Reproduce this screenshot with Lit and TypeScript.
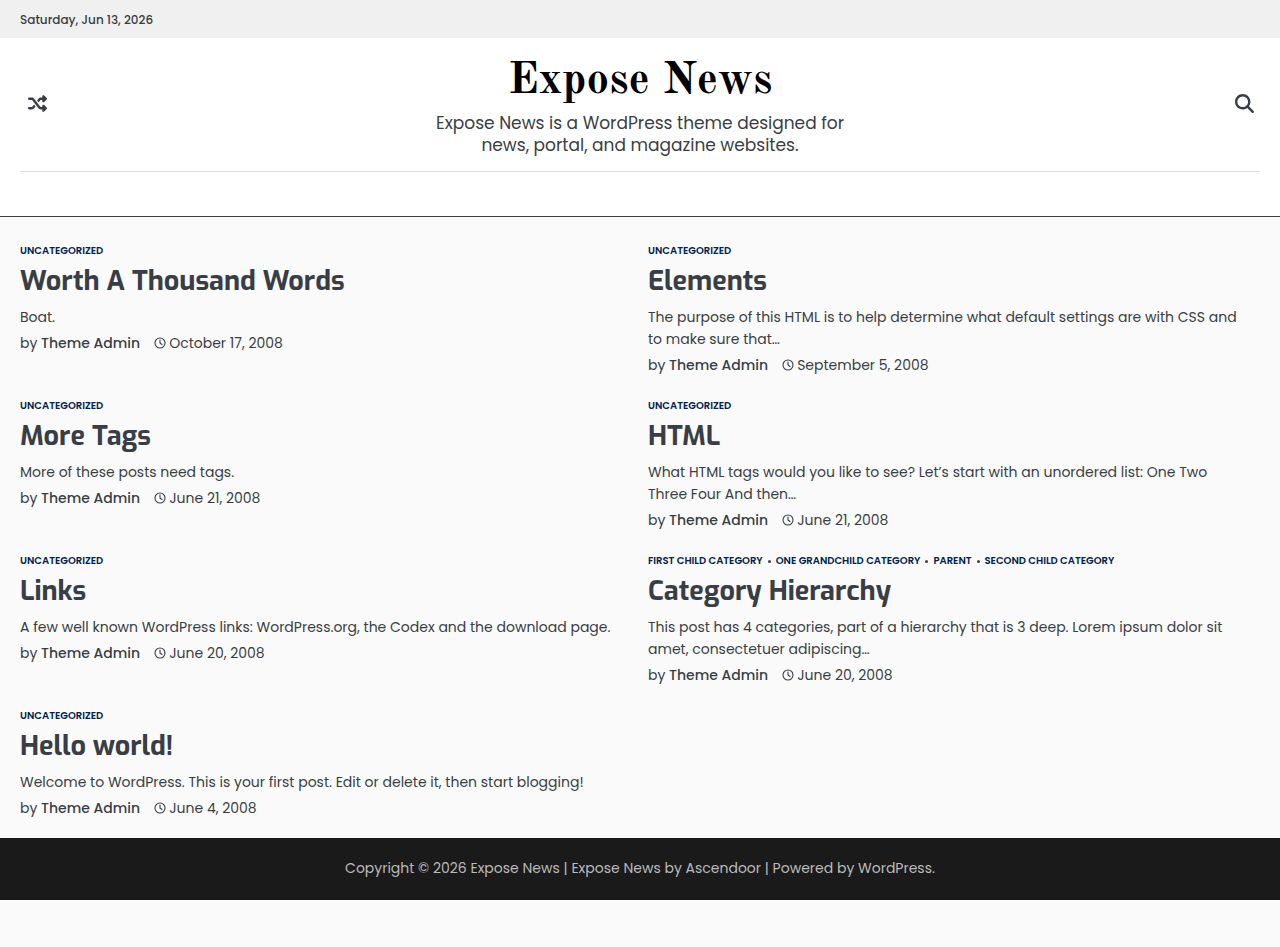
import { LitElement, html, css } from "lit";
import { customElement, property } from "lit/decorators.js";

interface Post {
  categories: string[];
  title: string;
  excerpt: string;
  date: string;
}

const posts: Post[] = [
  { categories: ["Uncategorized"], title: "Worth A Thousand Words", excerpt: "Boat.", date: "October 17, 2008" },
  {
    categories: ["Uncategorized"],
    title: "Elements",
    excerpt: "The purpose of this HTML is to help determine what default settings are with CSS and to make sure that…",
    date: "September 5, 2008",
  },
  { categories: ["Uncategorized"], title: "More Tags", excerpt: "More of these posts need tags.", date: "June 21, 2008" },
  {
    categories: ["Uncategorized"],
    title: "HTML",
    excerpt: "What HTML tags would you like to see? Let’s start with an unordered list: One Two Three Four And then…",
    date: "June 21, 2008",
  },
  {
    categories: ["Uncategorized"],
    title: "Links",
    excerpt: "A few well known WordPress links: WordPress.org, the Codex and the download page.",
    date: "June 20, 2008",
  },
  {
    categories: ["First Child Category", "One Grandchild Category", "Parent", "Second Child Category"],
    title: "Category Hierarchy",
    excerpt: "This post has 4 categories, part of a hierarchy that is 3 deep. Lorem ipsum dolor sit amet, consectetuer adipiscing…",
    date: "June 20, 2008",
  },
  {
    categories: ["Uncategorized"],
    title: "Hello world!",
    excerpt: "Welcome to WordPress. This is your first post. Edit or delete it, then start blogging!",
    date: "June 4, 2008",
  },
];

@customElement("post-card")
export class PostCard extends LitElement {
  @property({ attribute: false }) post!: Post;

  static styles = css`
    :host {
      display: block;
      min-width: 0;
    }
    a {
      color: inherit;
      text-decoration: none;
    }
    .categories {
      display: flex;
      flex-wrap: wrap;
      align-items: center;
      gap: 0 5px;
      margin: 0 0 3px;
      padding: 0;
      list-style: none;
      font-size: 10px;
      line-height: 20px;
      font-weight: 600;
      text-transform: uppercase;
      color: #00224f;
    }
    .category {
      display: flex;
      align-items: center;
      gap: 5px;
    }
    .category + .category::before {
      content: "";
      width: 3px;
      height: 3px;
      border-radius: 50%;
      background: #393e46;
    }
    .title {
      margin: 0 0 8px;
      font-family: Exo, "Exo 2", "Open Sans", sans-serif;
      font-size: 27px;
      line-height: 34px;
      font-weight: 700;
    }
    .excerpt {
      margin: 0 0 4px;
      padding-right: 12px;
    }
    .meta {
      display: flex;
      align-items: center;
      gap: 14px;
    }
    .author {
      font-weight: 500;
    }
    .date {
      display: flex;
      align-items: center;
      gap: 3px;
    }
    .clock {
      width: 12px;
      height: 12px;
      fill: none;
      stroke: currentColor;
      stroke-width: 1.1;
      stroke-linecap: round;
      stroke-linejoin: round;
    }
  `;

  render() {
    const { categories, title, excerpt, date } = this.post;
    return html`
      <article>
        <ul class="categories">
          ${categories.map((name) => html`<li class="category"><a href="#">${name}</a></li>`)}
        </ul>
        <h2 class="title"><a href="#">${title}</a></h2>
        <p class="excerpt">${excerpt}</p>
        <div class="meta">
          <span>by <a class="author" href="#">Theme Admin</a></span>
          <a class="date" href="#">
            <svg class="clock" viewBox="0 0 12 12" aria-hidden="true">
              <circle cx="6" cy="6" r="5" />
              <path d="M6 3V6l2 1.500" />
            </svg>
            <time>${date}</time>
          </a>
        </div>
      </article>
    `;
  }
}

@customElement("app-root")
export class AppRoot extends LitElement {
  static styles = css`
    :host {
      display: block;
      min-height: 100vh;
      background: #fafafa;
      color: #393e46;
      font-family: Poppins, Inter, sans-serif;
      font-size: 14px;
      line-height: 22px;
    }
    a {
      color: inherit;
      text-decoration: none;
    }
    .topbar {
      padding: 9px 20px 7px;
      background: #f0f0f0;
      font-size: 12px;
      font-weight: 500;
    }
    .header {
      background: #fff;
      border-bottom: 1px solid #393e46;
      padding: 0 20px 44px;
    }
    .masthead {
      display: grid;
      grid-template-columns: 1fr minmax(0, 432px) 1fr;
      align-items: center;
      padding: 12px 0 15px;
      border-bottom: 1px solid #dedede;
    }
    .branding {
      padding-top: 4px;
      text-align: center;
    }
    .site-title {
      margin: 0 0 2px;
      font-family: "Old Standard TT", "Liberation Serif", serif;
      font-size: 45px;
      line-height: 56px;
      font-weight: 700;
      color: #000;
    }
    .tagline {
      margin: 0;
      font-size: 17px;
      line-height: 22px;
    }
    .icon-button {
      display: flex;
      padding: 8px;
      border: 0;
      background: none;
      color: inherit;
      justify-self: start;
    }
    .search {
      justify-self: end;
      padding: 6px;
    }
    .icon {
      width: 19px;
      height: 19px;
      fill: currentColor;
    }
    .posts {
      display: grid;
      grid-template-columns: repeat(2, minmax(0, 1fr));
      gap: 20px 16px;
      padding: 24px 20px 19px;
    }
    .footer {
      padding: 19px 20px 21px;
      background: #1a1a1a;
      color: #bababa;
      text-align: center;
    }
    .footer p {
      margin: 0;
    }
  `;

  render() {
    return html`
      <div class="topbar">Saturday, Jun 13, 2026</div>
      <header class="header">
        <div class="masthead">
          <button class="icon-button" type="button" aria-label="Random post">
            <svg class="icon" viewBox="0 0 512 512">
              <path
                d="M403.8 34.4c12-5 25.700-2.200 34.900 6.900l64 64c6 6 9.400 14.100 9.400 22.600s-3.400 16.600-9.400 22.600l-64 64c-9.200 9.200-22.900 11.900-34.900 6.900S384 204.900 384 192V160H352c-10.100 0-19.600 4.700-25.600 12.800L284 229.300 244 176l31.200-41.600C293.300 110.200 321.800 96 352 96h32V64c0-12.900 7.800-24.600 19.800-29.600zM164 282.700L204 336l-31.200 41.600C154.700 401.800 126.200 416 96 416H32c-17.700 0-32-14.300-32-32s14.300-32 32-32H96c10.100 0 19.600-4.700 25.600-12.800L164 282.700zm274.600 188c-9.200 9.200-22.900 11.900-34.900 6.900s-19.800-16.600-19.800-29.600V416H352c-30.200 0-58.700-14.200-76.800-38.400L121.600 172.800c-6-8.100-15.500-12.800-25.600-12.800H32c-17.700 0-32-14.300-32-32s14.300-32 32-32H96c30.200 0 58.700 14.200 76.800 38.400L326.400 339.200c6 8.100 15.500 12.800 25.600 12.800h32V320c0-12.900 7.800-24.600 19.800-29.600s25.700-2.200 34.900 6.900l64 64c6 6 9.400 14.100 9.400 22.600s-3.400 16.600-9.400 22.600l-64 64z"
              />
            </svg>
          </button>
          <div class="branding">
            <h1 class="site-title"><a href="#">Expose News</a></h1>
            <p class="tagline">Expose News is a WordPress theme designed for news, portal, and magazine websites.</p>
          </div>
          <button class="icon-button search" type="button" aria-label="Search">
            <svg class="icon" viewBox="0 0 512 512">
              <path
                d="M416 208c0 45.900-14.900 88.300-40 122.700L502.600 457.400c12.500 12.500 12.500 32.800 0 45.300s-32.800 12.500-45.300 0L330.700 376c-34.400 25.200-76.800 40-122.700 40C93.100 416 0 322.900 0 208S93.100 0 208 0S416 93.100 416 208zM208 352a144 144 0 1 0 0-288 144 144 0 1 0 0 288z"
              />
            </svg>
          </button>
        </div>
      </header>
      <main class="posts">
        ${posts.map((post) => html`<post-card .post=${post}></post-card>`)}
      </main>
      <footer class="footer">
        <p>
          Copyright © 2026 <a href="#">Expose News</a> | Expose News by <a href="#">Ascendoor</a> | Powered by
          <a href="#">WordPress</a>.
        </p>
      </footer>
    `;
  }
}
